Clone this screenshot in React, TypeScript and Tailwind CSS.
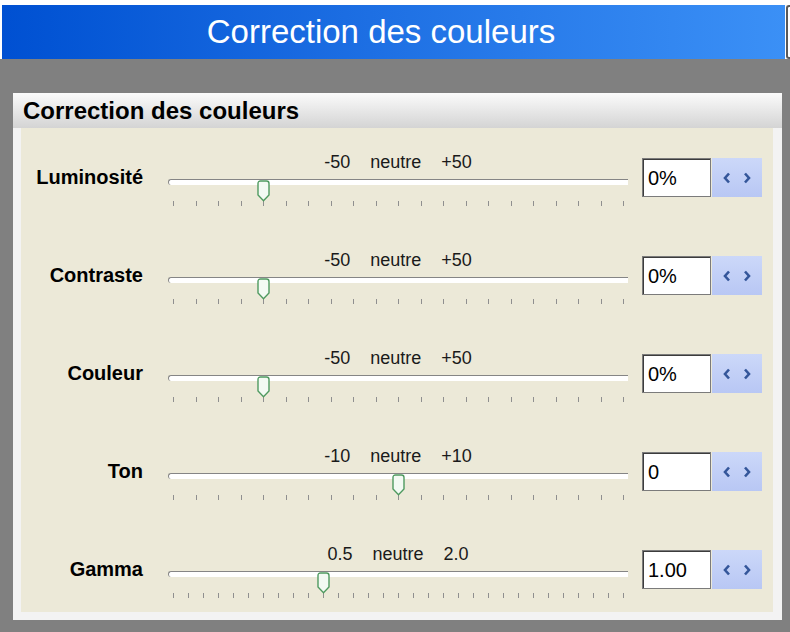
import React from "react";

interface RowData {
  label: string;
  min: string;
  max: string;
  value: string;
  ticks: number;
  pos: number;
}

const rows: RowData[] = [
  { label: "Luminosité", min: "-50", max: "+50", value: "0%", ticks: 21, pos: 4 },
  { label: "Contraste", min: "-50", max: "+50", value: "0%", ticks: 21, pos: 4 },
  { label: "Couleur", min: "-50", max: "+50", value: "0%", ticks: 21, pos: 4 },
  { label: "Ton", min: "-10", max: "+10", value: "0", ticks: 21, pos: 10 },
  { label: "Gamma", min: "0.5", max: "2.0", value: "1.00", ticks: 31, pos: 10 },
];

const TICK_SPAN = 450;

function Thumb() {
  return (
    <svg width="13" height="22" viewBox="0 0 13 22">
      <path
        d="M1 3.5 Q1 1 3.5 1 H9.5 Q12 1 12 3.5 V15 L6.5 20.8 L1 15 Z"
        fill="#f3faf3"
        stroke="#4f9a60"
        strokeWidth="1.4"
      />
    </svg>
  );
}

function Spinner() {
  return (
    <div className="ml-[1px] flex h-[39px] w-[50px] items-center justify-center gap-[12px] bg-linear-to-b from-[#ccd8f9] to-[#b8c7f4]">
      <svg width="8" height="12" viewBox="0 0 8 12">
        <path d="M6 1.5 L2 6 L6 10.5" fill="none" stroke="#34569a" strokeWidth="2.6" />
      </svg>
      <svg width="8" height="12" viewBox="0 0 8 12">
        <path d="M2 1.5 L6 6 L2 10.5" fill="none" stroke="#34569a" strokeWidth="2.6" />
      </svg>
    </div>
  );
}

function SliderRow({ row, last }: { row: RowData; last: boolean }) {
  const step = TICK_SPAN / (row.ticks - 1);
  const thumbLeft = 5 + step * row.pos - 6;

  return (
    <div className={`flex items-start ${last ? "h-[75px]" : "h-[98px]"}`}>
      <div className="w-[122px] pt-[20px] text-right text-[20px] leading-[24px] font-bold text-black">
        {row.label}
      </div>

      <div className="ml-[25px] w-[460px] pt-[8px]">
        <div className="flex justify-center gap-[20px] text-[18px] leading-[18px] text-[#1a1a1a]">
          <span>{row.min}</span>
          <span>neutre</span>
          <span>{row.max}</span>
        </div>
        <div className="relative mt-[8px] h-[34px]">
          <div className="mt-[6px] h-[6px] rounded-l-[3px] border-t border-l border-[#858585] bg-white" />
          <div className="mt-[16px] ml-[5px] flex h-[5px] w-[451px] justify-between">
            {Array.from({ length: row.ticks }).map((_, i) => (
              <div key={i} className="h-[5px] w-px bg-[#8f8f8f]" />
            ))}
          </div>
          <div className="absolute top-[1px]" style={{ left: thumbLeft }}>
            <Thumb />
          </div>
        </div>
      </div>

      <div className="mt-[13px] ml-[14px] flex">
        <div className="flex h-[39px] w-[69px] items-center border border-[#7b7b7b] bg-white pl-[5px] text-[20px] text-black shadow-[inset_1px_1px_0_#3c3c3c]">
          {row.value}
        </div>
        <Spinner />
      </div>
    </div>
  );
}

export default function App() {
  return (
    <div className="h-[632px] w-[790px] overflow-hidden bg-[#808080] font-['Liberation_Sans',Arial,sans-serif]">
      <div className="h-[5px] bg-white" />
      <div className="flex h-[54px] bg-white">
        <div className="ml-[2px] flex flex-1 items-center justify-center bg-linear-to-r from-[#0050d2] to-[#3b90f6] pr-[25px] text-[33px] text-white">
          Correction des couleurs
        </div>
        <div className="ml-[1px] w-[4px] rounded-l-[3px] border-y-2 border-l-2 border-[#5a5a5a] bg-white" />
      </div>

      <div className="h-[34px]" />

      <div className="mr-[8px] ml-[13px] h-[527px] bg-[#f3f3f3]">
        <div className="flex h-[35px] items-center bg-linear-to-b from-[#fbfbfb] to-[#d4d4d4] pl-[10px] text-[24px] leading-[24px] font-bold text-black">
          Correction des couleurs
        </div>
        <div className="mr-[9px] ml-[8px] h-[484px] bg-[#ece9d8] pt-[17px]">
          {rows.map((row, i) => (
            <SliderRow key={row.label} row={row} last={i === rows.length - 1} />
          ))}
        </div>
      </div>
    </div>
  );
}
